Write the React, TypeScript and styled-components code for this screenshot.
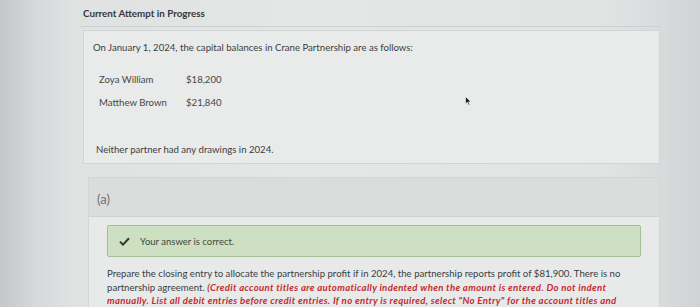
import React from "react";
import styled, { createGlobalStyle } from "styled-components";

const GlobalStyle = createGlobalStyle`
  html, body {
    margin: 0;
    padding: 0;
  }
  body {
    width: 700px;
    height: 307px;
    overflow: hidden;
    font-family: Lato, "Open Sans", "Liberation Sans", sans-serif;
    color: #3b3e41;
    background: linear-gradient(
      to right,
      #c3c7c9 0px,
      #d6d9da 35px,
      #e0e2e2 75px,
      #e5e6e6 300px,
      #e2e4e4 600px,
      #d8dbdc 662px,
      #cfd3d4 700px
    );
  }
`;

const Page = styled.div`
  position: relative;
  width: 580px;
  height: 307px;
  margin-left: 80px;
  overflow: hidden;
`;

const Heading = styled.div`
  height: 27px;
  box-sizing: border-box;
  padding: 7px 0 0 3px;
  font-size: 9.8px;
  font-weight: 700;
  line-height: 12px;
  color: #35383b;
  border-bottom: 1px solid #cdd0d0;
`;

const Card = styled.div`
  margin: 3px 0 0 3px;
  padding: 11px 9px 7px 9px;
  border: 1px solid #d2d5d5;
  background: #e9eaea;
  font-size: 9.6px;
  line-height: 12px;
`;

const BalanceTable = styled.div`
  display: grid;
  grid-template-columns: 87px auto;
  row-gap: 11px;
  margin: 20px 0 0 6px;
  color: #45484b;
`;

const Note = styled.div`
  margin: 35px 0 0 3px;
`;

const Part = styled.div`
  margin: 13px 0 0 8px;
  border: 1px solid #d3d6d6;
  border-bottom: none;
`;

const PartHeader = styled.div`
  height: 39px;
  box-sizing: border-box;
  padding: 14px 0 0 8px;
  background: #dbdddd;
  border-bottom: 1px solid #d0d3d3;
  font-size: 13px;
  line-height: 15px;
  color: #6f7275;
`;

const PartBody = styled.div`
  padding: 8px 18px 0 18px;
  background: #e8eaea;
  height: 90px;
`;

const Success = styled.div<{ $tone?: string }>`
  display: flex;
  align-items: center;
  gap: 10px;
  height: 32px;
  box-sizing: border-box;
  padding-left: 11px;
  border: 1px solid #a3c095;
  border-radius: 2px;
  background: ${(p) => p.$tone ?? "#cde0c1"};
  font-size: 9.5px;
  color: #3e4a3b;
`;

const Prompt = styled.p`
  margin: 10px 0 0 0;
  font-size: 9.6px;
  line-height: 13.5px;
  white-space: nowrap;
  color: #3a3d40;
`;

const Warn = styled.em`
  font-weight: 700;
  letter-spacing: 0.33px;
  color: #c42a31;
`;

const Cursor = styled.svg`
  position: absolute;
  left: 385px;
  top: 96px;
`;

export default function App() {
  return (
    <>
      <GlobalStyle />
      <Page>
        <Heading>Current Attempt in Progress</Heading>
        <Card>
          <div>On January 1, 2024, the capital balances in Crane Partnership are as follows:</div>
          <BalanceTable>
            <span>Zoya William</span>
            <span>$18,200</span>
            <span>Matthew Brown</span>
            <span>$21,840</span>
          </BalanceTable>
          <Note>Neither partner had any drawings in 2024.</Note>
        </Card>
        <Part>
          <PartHeader>(a)</PartHeader>
          <PartBody>
            <Success>
              <svg width="11" height="9" viewBox="0 0 11 9">
                <path d="M1 4.6 L4 7.6 L10 1.2" fill="none" stroke="#2f3a2c" strokeWidth="2" />
              </svg>
              <span>Your answer is correct.</span>
            </Success>
            <Prompt>
              Prepare the closing entry to allocate the partnership profit if in 2024, the partnership reports profit of $81,900. There is no
              <br />
              partnership agreement. <Warn>(Credit account titles are automatically indented when the amount is entered. Do not indent</Warn>
              <br />
              <Warn>manually. List all debit entries before credit entries. If no entry is required, select "No Entry" for the account titles and</Warn>
            </Prompt>
          </PartBody>
        </Part>
        <Cursor width="7" height="10" viewBox="0 0 7 10">
          <path d="M0.5 0.5 L0.5 8 L2.3 6.3 L3.6 9.3 L4.8 8.8 L3.5 5.9 L6 5.9 Z" fill="#1c1d1f" stroke="#ffffff" strokeWidth="0.6" />
        </Cursor>
      </Page>
    </>
  );
}
